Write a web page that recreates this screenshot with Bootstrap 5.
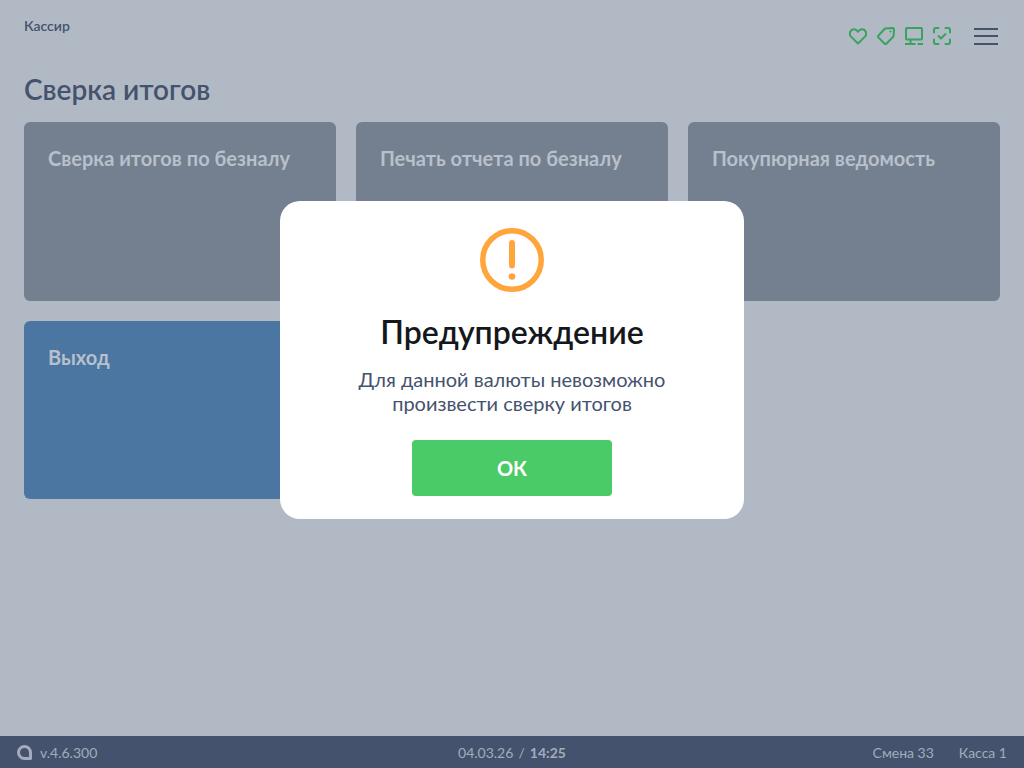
<!doctype html>
<html lang="ru">
<head>
<meta charset="utf-8">
<title>Сверка итогов</title>
<link href="https://cdn.jsdelivr.net/npm/bootstrap@5.3.0/dist/css/bootstrap.min.css" rel="stylesheet">
<style>
html,body{height:100%}
body{font-family:"Lato","Noto Sans",sans-serif;background:#b1b9c5;color:#45526d;overflow:hidden}
.app-root{height:768px}
.top-area{padding:17px 26px 0 24px;height:58px}
.role-name{font-size:14px;line-height:18px;font-weight:600}
.status-icons{gap:10px;margin-top:10px}
.status-icons svg{display:block}
.burger{width:24px;margin-left:13px;gap:5.500px}
.burger span{display:block;height:2px;background:#45526d}
.page-title{font-size:28px;line-height:34px;margin:14px 24px 16px;font-weight:600}
.tile-grid{display:grid;grid-template-columns:repeat(3,312px);gap:20px;padding:0 24px}
.tile{height:178.670px;border-radius:6px;background:#747f90;color:#b8c0cb;padding:23px 24px;font-size:20px;line-height:26px;font-weight:700}
.tile-blue{background:#4b76a2}
.bottom-bar{height:32px;background:#45526d;color:#a2acbb;font-size:14px;padding:0 17px;position:relative}
.bar-date{position:absolute;left:0;right:0;text-align:center}
.bar-sep{margin:0 1.500px}
.logo-mark{margin-right:8px}
.bar-right{gap:25px}
.dialog-box{position:fixed;left:280px;top:201px;width:464px;height:318px;background:#fff;border-radius:20px;padding-top:27px;text-align:center}
.dialog-title{font-size:32px;line-height:38px;color:#14171c;font-weight:600;margin:21px 0 15.500px}
.dialog-text{font-size:20px;line-height:24px;color:#45526d;margin:0}
.btn-ok{width:200px;height:56px;margin-top:25px;background:#4bca68;border:0;border-radius:4px;color:#fff;font-size:20px;font-weight:700}
.btn-ok:hover{background:#4bca68;color:#fff}
</style>
</head>
<body>
<div class="app-root d-flex flex-column">
  <div class="top-area d-flex justify-content-between align-items-start">
    <div class="role-name">Кассир</div>
    <div class="d-flex align-items-center status-icons">
      <svg width="18" height="18" viewBox="0 0 18 18" fill="none" stroke="#37a35c" stroke-width="2" stroke-linejoin="round"><path d="M9 16.500 2 9.600C-.3 7 1.200 2.200 5 2.200c1.800 0 3.100 1 4 2.400.9-1.400 2.200-2.400 4-2.400 3.800 0 5.300 4.800 3 7.400Z"/></svg>
      <svg width="18" height="18" viewBox="0 0 18 18" fill="none" stroke="#37a35c" stroke-width="2" stroke-linejoin="round"><path d="M8 1.500 15.500 1A1.500 1.500 0 0 1 17 2.500L16.500 9.500 9.500 16.500a1.500 1.500 0 0 1-2.100 0L1.500 10.600a1.500 1.500 0 0 1 0-2.100Z"/><circle cx="13.500" cy="4.500" r=".6" fill="#37a35c" stroke-width="1"/></svg>
      <svg width="18" height="18" viewBox="0 0 18 18" fill="none" stroke="#37a35c" stroke-width="2" stroke-linejoin="round"><rect x="1" y="1" width="16" height="11.500" rx="1"/><path d="M5.500 12.500V17M0 17h10.500M12.500 17H18"/></svg>
      <svg width="18" height="18" viewBox="0 0 18 18" fill="none" stroke="#37a35c" stroke-width="2" stroke-linecap="round" stroke-linejoin="round"><path d="M1 5.500V3a2 2 0 0 1 2-2h2.500M12.500 1H15a2 2 0 0 1 2 2v2.500M17 12.500V15a2 2 0 0 1-2 2h-2.500M5.500 17H3a2 2 0 0 1-2-2v-2.500"/><path d="m5.500 9 2.500 2.500 4.500-4.500"/></svg>
      <div class="burger d-flex flex-column"><span></span><span></span><span></span></div>
    </div>
  </div>
  <h1 class="page-title">Сверка итогов</h1>
  <div class="tile-grid flex-grow-1 align-content-start">
    <div class="tile">Сверка итогов по безналу</div>
    <div class="tile">Печать отчета по безналу</div>
    <div class="tile">Покупюрная ведомость</div>
    <div class="tile tile-blue">Выход</div>
  </div>
  <div class="bottom-bar d-flex align-items-center justify-content-between">
    <div class="bar-date">04.03.26<span class="bar-sep"> / </span><b>14:25</b></div>
    <div class="d-flex align-items-center position-relative">
      <svg class="logo-mark" width="15" height="15" viewBox="0 0 15 15" fill="none" stroke="#a2acbb" stroke-width="3"><path d="M13.500 13.500H7.500a6 6 0 1 1 6-6Z" stroke-linejoin="round"/></svg>
      <span>v.4.6.300</span>
    </div>
    <div class="d-flex bar-right position-relative"><span>Смена 33</span><span>Касса 1</span></div>
  </div>
</div>
<div class="dialog-box">
  <svg width="64" height="64" viewBox="0 0 64 64" fill="none" class="d-block mx-auto"><circle cx="32" cy="32" r="29.250" stroke="#ffa53c" stroke-width="5.500"/><path d="M32 15v22.500" stroke="#ffa53c" stroke-width="6" stroke-linecap="round"/><circle cx="32" cy="48.500" r="3.300" fill="#ffa53c"/></svg>
  <div class="dialog-title">Предупреждение</div>
  <p class="dialog-text">Для данной валюты невозможно<br>произвести сверку итогов</p>
  <button type="button" class="btn btn-ok">ОК</button>
</div>
<script src="https://cdn.jsdelivr.net/npm/bootstrap@5.3.0/dist/js/bootstrap.bundle.min.js"></script>
</body>
</html>
